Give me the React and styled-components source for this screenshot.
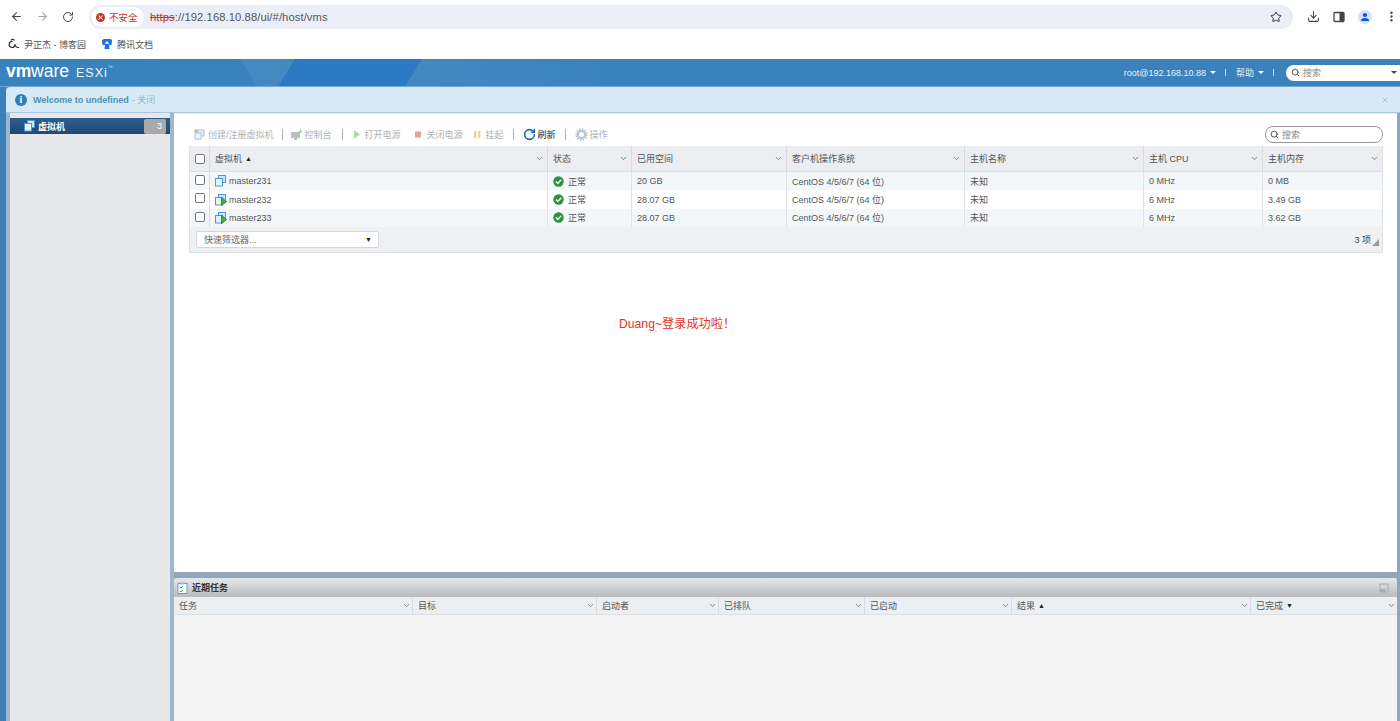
import React from "react";
import styled, { createGlobalStyle } from "styled-components";
import { ArrowLeft, ArrowRight, RotateCw, Star, Download, EllipsisVertical, ChevronDown, Search, X } from "lucide-react";

const Global = createGlobalStyle`
  html, body { margin: 0; padding: 0; height: 100%; overflow: hidden; background: #fff; }
  #root { height: 100%; }
  * { box-sizing: border-box; }
`;
const SANS = `"Liberation Sans", "Noto Sans CJK SC", sans-serif`;

const Page = styled.div`
  width: 1400px; height: 721px; display: flex; flex-direction: column; overflow: hidden;
  font-family: ${SANS}; font-size: 9px; color: #444;
`;
const TopRow = styled.div`
  height: 33px; flex: none; display: flex; align-items: center; background: #fff;
`;
const NavButton = styled.div`
  width: 26px; height: 26px; display: flex; align-items: center; justify-content: center;
  color: ${p => p.$dim ? "#a8a8a8" : "#444"};
`;
const NavGroup = styled.div`
  display: flex; margin-left: 3px; width: 86px; flex: none;
`;
const UrlPill = styled.div`
  width: 1204px; flex: none; height: 24px; margin-top: 1px; border-radius: 12px; background: #ebeef6;
  display: flex; align-items: center; padding: 0 5px 0 2px;
`;
const SecureChip = styled.div`
  height: 20px; width: 53px; border-radius: 10px; background: #fff; display: flex; align-items: center;
  padding-left: 5px; gap: 4px; color: #c5342a; font-size: 9.5px;
`;
const WarnDot = styled.span`
  width: 9px; height: 9px; border-radius: 50%; background: #c5342a; color: #fff; display: flex;
  align-items: center; justify-content: center;
`;
const UrlText = styled.div`
  margin-left: 6px; font-size: 11.2px; color: #55555a; flex: 1; letter-spacing: 0.1px; margin-top: -1px;
  font-family: "Liberation Sans", sans-serif;
`;
const Strike = styled.span`
  color: #c5342a; text-decoration: line-through;
`;
const ToolIcons = styled.div`
  display: flex; align-items: center; flex: none; margin-left: 7px; color: #444;
`;
const ToolIcon = styled.div`
  width: 26px; flex: none; display: flex; align-items: center; justify-content: center;
`;
const Avatar = styled.div`
  width: 14px; height: 14px; border-radius: 50%; background: #d3e3fd; color: #0b57d0;
  display: flex; align-items: center; justify-content: center;
`;
const Bookmarks = styled.div`
  height: 26px; flex: none; padding: 0 0 4px 8px; display: flex; align-items: center; gap: 15px; background: #fff;
`;
const Bookmark = styled.div`
  display: flex; align-items: center; gap: 4px; font-size: 9px; color: #555; height: 22px;
`;

const Esxi = styled.div`
  flex: 1; min-height: 0; display: flex; flex-direction: column; background: #3b81bc;
`;
const Header = styled.div`
  height: 28px; flex: none; display: flex; align-items: center; color: #fff; padding: 0 0 0 6px;
  position: relative; overflow: hidden; background: #3b81bc;
  border-bottom: 1px solid #78a5d8;
`;
const HeaderShape = styled.svg`
  position: absolute; left: 0; top: 0; width: 1400px; height: 28px; pointer-events: none;
`;
const Logo = styled.div`
  display: flex; align-items: baseline; position: relative; font-family: "Liberation Sans", sans-serif;
  color: #fff; margin-top: -2px;
`;
const LogoVm = styled.span`font-size: 17.5px; font-weight: 700; letter-spacing: -0.1px;`;
const LogoWare = styled.span`font-size: 17.5px; letter-spacing: 0;`;
const LogoEsxi = styled.span`font-size: 12.5px; letter-spacing: 1px; margin-left: 7px; color: #eef4fa;`;
const LogoTm = styled.span`font-size: 5px; color: #dce9f4; align-self: flex-start; margin-top: 3px;`;
const HeaderRight = styled.div`
  margin-left: auto; display: flex; align-items: center; position: relative; font-size: 9px; color: #e8f1f9;
`;
const HeaderMenu = styled.div`
  display: flex; align-items: center; gap: 4px; margin-right: 9px;
`;
const Caret = styled.span`
  width: 0; height: 0; border-left: 3px solid transparent; border-right: 3px solid transparent;
  border-top: 3px solid ${p => p.$color || "#fff"}; display: inline-block;
  margin-left: ${p => p.$auto ? "auto" : "0"};
`;
const HeaderSep = styled.span`
  width: 1px; height: 7px; background: #bcd6ec; margin-right: 10px;
`;
const HeaderSearch = styled.div`
  width: 114px; height: 16px; background: #fff; border-radius: 8px 0 0 8px; display: flex; align-items: center;
  padding: 0 3px 0 5px; color: #888; gap: 3px; margin-left: 2px;
`;
const Notice = styled.div`
  height: 26px; flex: none; margin-left: 6px; background: #d6e9f4; border-radius: 4px 0 0 0;
  border-bottom: 1px solid #a9c3e6; display: flex; align-items: center; padding: 0 10px 0 9px;
  font-size: 9px; color: #9ab;
`;
const InfoDot = styled.span`
  width: 12px; height: 12px; border-radius: 50%; background: #2f7cc4; color: #fff; font-size: 10px; font-weight: 700;
  display: flex; align-items: center; justify-content: center; margin-right: 6px; font-family: "Liberation Serif", serif;
`;
const NoticeStrong = styled.b`color: #4b93ae;`;
const NoticeLink = styled.span`color: #9fb6c4; margin-left: 3px;`;
const NoticeClose = styled.span`margin-left: auto; margin-right: 1px; color: #a5b7c4; display: flex;`;

const Body = styled.div`
  flex: 1; min-height: 0; display: grid; grid-template-columns: 174px 1fr; background: #8fa6bd;
`;
const Side = styled.div`
  display: flex; background: linear-gradient(90deg, #3a80b8 0, #3a80b8 6px, #a0b6cd 6px, #a0b6cd 100%);
  padding: 0 4px 0 10px;
`;
const SideInner = styled.div`
  flex: 1; background: #e6e8ec; padding-top: 5px;
`;
const SideItem = styled.div`
  height: 16px; background: linear-gradient(#2d5c8c, #1f4a76); color: #fff; font-weight: 700;
  display: flex; align-items: center; padding-left: 14px; gap: 2px; font-size: 9px;
`;
const SideBadge = styled.span`
  margin-left: auto; margin-right: 4px; width: 22px; height: 15px; background: #a9a9a9; border-radius: 2px; color: #fff;
  text-align: right; padding-right: 4px; line-height: 15px; font-weight: 400;
`;
const Content = styled.div`
  display: flex; flex-direction: column; min-width: 0; padding: 0 3px 0 0;
`;
const MainPanel = styled.div`
  height: 459px; flex: none; background: #fff; padding: 10px 14px 0 15px;
  border-top: 1px solid #e9eef5;
`;
const ToolRow = styled.div`
  height: 20px; display: flex; align-items: center; padding-left: 4px;
`;
const ToolItem = styled.div`
  display: flex; align-items: center; gap: 2px; color: ${p => p.$on ? "#222" : "#aeb2b6"};
  margin-right: ${p => p.$gap ?? 10}px; margin-left: ${p => p.$left ?? 0}px; font-size: 9px;
`;
const ToolSep = styled.span`
  width: 1px; height: 11px; background: #a9acb0; margin-right: 7px;
`;
const TableSearch = styled.div`
  margin-left: auto; width: 118px; height: 17px; border: 1px solid #9a9a9a; border-radius: 8px; background: #fff;
  display: flex; align-items: center; padding-left: 4px; gap: 3px; color: #8a8a8a; font-size: 9px;
`;
const Table = styled.div`
  margin-top: 2px; border: 1px solid #dfe2e5; border-top: 0;
`;
const GridRow = styled.div`
  display: grid; grid-template-columns: ${p => p.$cols}; height: ${p => p.$h}px;
  background: ${p => p.$bg};
  border-bottom: ${p => p.$line ? "1px solid #dde0e3" : "0"};
`;
const HeadCell = styled.div`
  display: flex; align-items: center; padding: 0 ${p => p.$tight ? 1 : 3}px 0 5px; border-right: 1px solid #d8dbdf; color: #555; gap: 3px;
  min-width: 0;
  &:last-child { border-right: 0; }
`;
const SortMark = styled.span`font-size: 7px; color: #222;`;
const Chevron = styled.span`margin-left: auto; color: #666; display: flex;`;
const CheckCell = styled.div`
  display: flex; align-items: ${p => p.$top ? "flex-start" : "center"}; padding: ${p => p.$top ? "3px 0 0 5px" : "0 0 0 5px"};
  border-right: 1px solid #d8dbdf;
`;
const Check = styled.span`
  width: 10px; height: 10px; border: 1px solid #777; border-radius: 2px; background: #fff; display: block;
`;
const Cell = styled.div`
  display: flex; align-items: center; padding: 0 5px; border-right: 1px solid #e0e3e6; color: #555;
  gap: ${p => p.$gap ?? 4}px; min-width: 0; white-space: nowrap;
  &:last-child { border-right: 0; }
`;
const Footer = styled.div`
  height: 25px; background: #eef0f2; display: flex; align-items: center; padding: 0 3px 0 6px; color: #444;
`;
const Select = styled.div`
  width: 183px; height: 17px; background: #fff; border: 1px solid #d5d8db; border-radius: 2px; display: flex;
  align-items: center; padding: 0 6px 0 7px; color: #666;
`;
const SelectArrow = styled.span`margin-left: auto; font-size: 7px; color: #222;`;
const Count = styled.span`margin-left: auto; color: #444; margin-right: 1px;`;
const Grip = styled.svg`width: 7px; height: 7px; margin-top: 6px;`;
const Message = styled.div`
  margin: 64px 0 0 430px; color: #e2342c; font-size: 12.2px; line-height: 14px; white-space: nowrap;
`;
const TaskSplit = styled.div`height: 6px; flex: none;`;
const TaskPanel = styled.div`
  flex: 1; min-height: 0; background: #f4f4f4; display: flex; flex-direction: column;
  border-radius: 3px 3px 0 0; overflow: hidden;
`;
const TaskTitle = styled.div`
  height: 19px; flex: none; display: flex; align-items: center; padding: 0 8px 0 3px; gap: 4px;
  background: linear-gradient(#e6e7e9, #babbbe); color: #333; font-weight: 700; font-size: 9px;
`;
const TaskCollapse = styled.svg`margin-left: auto; width: 10px; height: 10px;`;

const Cols = "20px 338px 84px 155px 178px 179px 119px 1fr";
const TaskCols = "239px 184px 122px 146px 147px 239px 1fr";

const VmIcon = ({ on }) => (
  <svg width="12" height="12" viewBox="0 0 12 12">
    <rect x="3.5" y="0.5" width="7" height="7" fill="#cfe6fa" stroke="#4a98d8" />
    <rect x="0.5" y="3.500" width="7" height="7.500" fill="#e4f2fc" stroke="#4a98d8" />
    {on && <path d="M6.500 3.500 L11.700 7.500 L6.500 11.500 Z" fill="#3fb02f" stroke="#1f7f1c" strokeWidth="0.8" />}
  </svg>
);
const OkIcon = () => (
  <svg width="11" height="11" viewBox="0 0 11 11">
    <circle cx="5.5" cy="5.5" r="5.2" fill="#25963a" />
    <path d="M2.9 5.6 L4.8 7.5 L8.2 3.8" fill="none" stroke="#fff" strokeWidth="1.4" />
  </svg>
);
const HeadChevron = () => <Chevron><ChevronDown size={9} strokeWidth={2} /></Chevron>;

const vms = [
  { name: "master231", on: false, space: "20 GB", cpu: "0 MHz", mem: "0 MB", bg: "#f4f7f9" },
  { name: "master232", on: true, space: "28.07 GB", cpu: "6 MHz", mem: "3.49 GB", bg: "#ffffff" },
  { name: "master233", on: true, space: "28.07 GB", cpu: "6 MHz", mem: "3.62 GB", bg: "#f4f7f9" },
];
const heads = [["虚拟机", "▲"], ["状态"], ["已用空间"], ["客户机操作系统"], ["主机名称"], ["主机 CPU"], ["主机内存"]];
const taskHeads = [["任务"], ["目标"], ["启动者"], ["已排队"], ["已启动"], ["结果", "▲"], ["已完成", "▼"]];

const tools = [
  { label: "创建/注册虚拟机", icon: <svg width="13" height="13" viewBox="0 0 13 13"><rect x="5" y="2" width="6" height="6" fill="#e3eef5" stroke="#a9c6da"/><rect x="2" y="5" width="6" height="6" fill="#eef5f9" stroke="#a9c6da"/><path d="M1 3h4M3 1v4" stroke="#9ccf9a" strokeWidth="1.4"/></svg>, gap: 8, sep: true },
  { label: "控制台", icon: <svg width="13" height="13" viewBox="0 0 13 13"><rect x="1" y="4" width="9" height="6" fill="#b9c1c6"/><rect x="4" y="10" width="3" height="2" fill="#b9c1c6"/><path d="M7 5 L11 1 L12 5 Z" fill="#a8d8a2"/></svg>, gap: 10, sep: true },
  { label: "打开电源", icon: <svg width="13" height="13" viewBox="0 0 13 13"><path d="M4 2 L10 6.5 L4 11 Z" fill="#aedba4"/></svg>, gap: 11 },
  { label: "关闭电源", icon: <svg width="13" height="13" viewBox="0 0 13 13"><rect x="3" y="3.5" width="6" height="6" fill="#eda0a5"/></svg>, gap: 8 },
  { label: "挂起", icon: <svg width="13" height="13" viewBox="0 0 13 13"><rect x="3" y="3" width="2.4" height="7" fill="#f2d096"/><rect x="7" y="3" width="2.4" height="7" fill="#f2d096"/></svg>, gap: 9, sep: true },
  { label: "刷新", on: true, left: 2, icon: <RotateCw size={13} strokeWidth={2.8} color="#1565c0" />, gap: 9, sep: true },
  { label: "操作", left: 2, icon: <svg width="13" height="13" viewBox="0 0 13 13"><circle cx="6.5" cy="6.5" r="3.6" fill="none" stroke="#b5c6d5" strokeWidth="2.2"/><circle cx="6.5" cy="6.5" r="5.4" fill="none" stroke="#b5c6d5" strokeWidth="1.6" strokeDasharray="1.6 1.2"/></svg>, gap: 0 },
];

export default function App() {
  return (
    <Page>
      <Global />
      <TopRow>
        <NavGroup>
          <NavButton><ArrowLeft size={13} strokeWidth={2} /></NavButton>
          <NavButton $dim><ArrowRight size={13} strokeWidth={2} /></NavButton>
          <NavButton><RotateCw size={12} strokeWidth={2} /></NavButton>
        </NavGroup>
        <UrlPill>
          <SecureChip>
            <WarnDot><X size={7} strokeWidth={3.5} /></WarnDot>
            不安全
          </SecureChip>
          <UrlText><Strike>https</Strike>://192.168.10.88/ui/#/host/vms</UrlText>
          <Star size={12} strokeWidth={2} color="#333" style={{ marginRight: 6 }} />
        </UrlPill>
        <ToolIcons>
          <ToolIcon><Download size={13} strokeWidth={2} /></ToolIcon>
          <ToolIcon>
            <svg width="12" height="12" viewBox="0 0 12 12"><rect x="1" y="1.5" width="10" height="9" rx="1" fill="none" stroke="#444" strokeWidth="1.3" /><rect x="6.5" y="1.5" width="4.5" height="9" fill="#444" /></svg>
          </ToolIcon>
          <ToolIcon>
            <Avatar><svg width="10" height="10" viewBox="0 0 10 10"><circle cx="5" cy="3" r="2.1" fill="currentColor" /><path d="M1 9c0-2.2 1.8-3 4-3s4 .8 4 3z" fill="currentColor" /></svg></Avatar>
          </ToolIcon>
          <ToolIcon><EllipsisVertical size={13} strokeWidth={2.4} /></ToolIcon>
        </ToolIcons>
      </TopRow>
      <Bookmarks>
        <Bookmark>
          <svg width="12" height="12" viewBox="0 0 12 12"><path d="M4.5 3.5a3 3 0 1 0 2.6 3.4" fill="none" stroke="#333" strokeWidth="1.2" /><path d="M3 2c1.5-1.2 3-.6 3.4.6M6.8 6c.4 2.4 2.2 3.6 4.2 3.4" fill="none" stroke="#333" strokeWidth="1.1" /></svg>
          尹正杰 - 博客园
        </Bookmark>
        <Bookmark>
          <svg width="12" height="12" viewBox="0 0 12 12"><path d="M1 3.2C1 2 2 1 3 1h6.5C10.500 1 11 2 11 3.200L10.500 7H8L8.500 11H3.500L4 7H1.500z" fill="#1d6ee8" /><path d="M6 3 L8.500 5.800H3.500z" fill="#fff" /></svg>
          腾讯文档
        </Bookmark>
      </Bookmarks>
      <Esxi>
        <Header>
          <HeaderShape viewBox="0 0 1400 28">
            <defs>
              <linearGradient id="headerFade" x1="0" x2="1" y1="0" y2="0">
                <stop offset="0" stopColor="#4489bf" />
                <stop offset="0.2" stopColor="#3b81bc" />
              </linearGradient>
            </defs>
            <rect x="0" y="0" width="240" height="28" fill="#3883bd" />
            <path d="M240 0 H295 L278 28 H258 Z" fill="#4489c0" />
            <path d="M295 0 H422 L405 28 H278 Z" fill="#2b78c3" />
            <path d="M422 0 H1400 V28 H405 Z" fill="url(#headerFade)" />
          </HeaderShape>
          <Logo>
            <LogoVm>vm</LogoVm><LogoWare>ware</LogoWare><LogoEsxi>ESXi</LogoEsxi><LogoTm>™</LogoTm>
          </Logo>
          <HeaderRight>
            <HeaderMenu>root@192.168.10.88 <Caret /></HeaderMenu>
            <HeaderSep />
            <HeaderMenu>帮助 <Caret /></HeaderMenu>
            <HeaderSep />
            <HeaderSearch>
              <Search size={9} strokeWidth={2.6} color="#555" />搜索
              <Caret $color="#444" $auto />
            </HeaderSearch>
          </HeaderRight>
        </Header>
        <Notice>
          <InfoDot>i</InfoDot>
          <NoticeStrong>Welcome to undefined</NoticeStrong>
          <NoticeLink>- 关闭</NoticeLink>
          <NoticeClose><X size={8} strokeWidth={2.4} /></NoticeClose>
        </Notice>
        <Body>
          <Side>
            <SideInner>
              <SideItem>
                <VmIcon />虚拟机
                <SideBadge>3</SideBadge>
              </SideItem>
            </SideInner>
          </Side>
          <Content>
            <MainPanel>
              <ToolRow>
                {tools.map(t => (
                  <React.Fragment key={t.label}>
                    <ToolItem $on={t.on} $gap={t.gap} $left={t.left}>{t.icon}{t.label}</ToolItem>
                    {t.sep && <ToolSep />}
                  </React.Fragment>
                ))}
                <TableSearch><Search size={9} strokeWidth={2.6} color="#555" />搜索</TableSearch>
              </ToolRow>
              <Table>
                <GridRow $cols={Cols} $h={26} $bg="#ebedf0" $line>
                  <CheckCell><Check /></CheckCell>
                  {heads.map(([l, s]) => (
                    <HeadCell key={l}>{l}{s && <SortMark>{s}</SortMark>}<HeadChevron /></HeadCell>
                  ))}
                </GridRow>
                {vms.map(v => (
                  <GridRow key={v.name} $cols={Cols} $h={18.4} $bg={v.bg}>
                    <CheckCell $top><Check /></CheckCell>
                    <Cell $gap={2}><VmIcon on={v.on} />{v.name}</Cell>
                    <Cell><OkIcon />正常</Cell>
                    <Cell>{v.space}</Cell>
                    <Cell>CentOS 4/5/6/7 (64 位)</Cell>
                    <Cell>未知</Cell>
                    <Cell>{v.cpu}</Cell>
                    <Cell>{v.mem}</Cell>
                  </GridRow>
                ))}
                <Footer>
                  <Select>快速筛选器...<SelectArrow>▼</SelectArrow></Select>
                  <Count>3 项</Count>
                  <Grip viewBox="0 0 7 7"><path d="M7 0 V7 H0 Z" fill="#9a9a9a" /></Grip>
                </Footer>
              </Table>
              <Message>Duang~登录成功啦！</Message>
            </MainPanel>
            <TaskSplit />
            <TaskPanel>
              <TaskTitle>
                <svg width="11" height="12" viewBox="0 0 11 12"><rect x="1" y="1.5" width="9" height="10" fill="#fff" stroke="#6aa0c8" /><rect x="3.500" y="0.500" width="4" height="2" fill="#8fc0e0" /><path d="M3 5l1 1 2-2M3 9l1 1 2-2" fill="none" stroke="#3a9a3a" /></svg>
                近期任务
                <TaskCollapse viewBox="0 0 10 10"><rect x="1" y="1" width="8" height="8" fill="none" stroke="#a9abae" /><rect x="1" y="6" width="5" height="3" fill="#a9abae" /></TaskCollapse>
              </TaskTitle>
              <GridRow $cols={TaskCols} $h={18} $bg="#eceff2" $line>
                {taskHeads.map(([l, s]) => (
                  <HeadCell key={l} $tight>{l}{s && <SortMark>{s}</SortMark>}<HeadChevron /></HeadCell>
                ))}
              </GridRow>
            </TaskPanel>
          </Content>
        </Body>
      </Esxi>
    </Page>
  );
}
